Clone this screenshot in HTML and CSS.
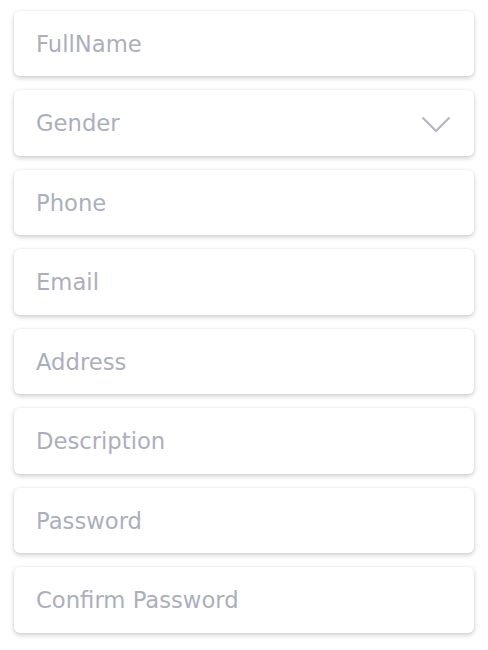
FILE: index.html
```html
<!DOCTYPE html>
<html>
<head>
<meta charset="utf-8">
<link rel="stylesheet" href="styles.css">
</head>
<body>
<form class="form">
  <div class="field"><span class="ph">FullName</span></div>
  <div class="field"><span class="ph">Gender</span>
    <svg class="chev" width="30" height="17" viewBox="0 0 30 17"><path d="M1.5 1.5 L15 15 L28.5 1.5" fill="none" stroke="#b3b5c2" stroke-width="2.2"/></svg>
  </div>
  <div class="field"><span class="ph">Phone</span></div>
  <div class="field"><span class="ph">Email</span></div>
  <div class="field"><span class="ph">Address</span></div>
  <div class="field"><span class="ph">Description</span></div>
  <div class="field"><span class="ph">Password</span></div>
  <div class="field"><span class="ph">Confirm Password</span></div>
</form>
</body>
</html>
```
FILE: styles.css
```css
html, body {
  margin: 0;
  padding: 0;
  background: #ffffff;
}
.form {
  display: flex;
  flex-direction: column;
  gap: 14px;
  padding: 10.7px 14px 17px 14px;
}
.field {
  height: 65.5px;
  box-sizing: border-box;
  background: #ffffff;
  border-radius: 6px;
  box-shadow: 0 2px 5px rgba(0, 0, 0, 0.2), 0 0 3px rgba(0, 0, 0, 0.05);
  display: flex;
  align-items: center;
  justify-content: space-between;
  padding: 1px 22px 0 22px;
}
.ph {
  font-family: "DejaVu Sans", sans-serif;
  font-size: 22.7px;
  color: #abafbd;
}
.chev {
  display: block;
  margin-right: 1px;
  margin-top: 3px;
}
```
